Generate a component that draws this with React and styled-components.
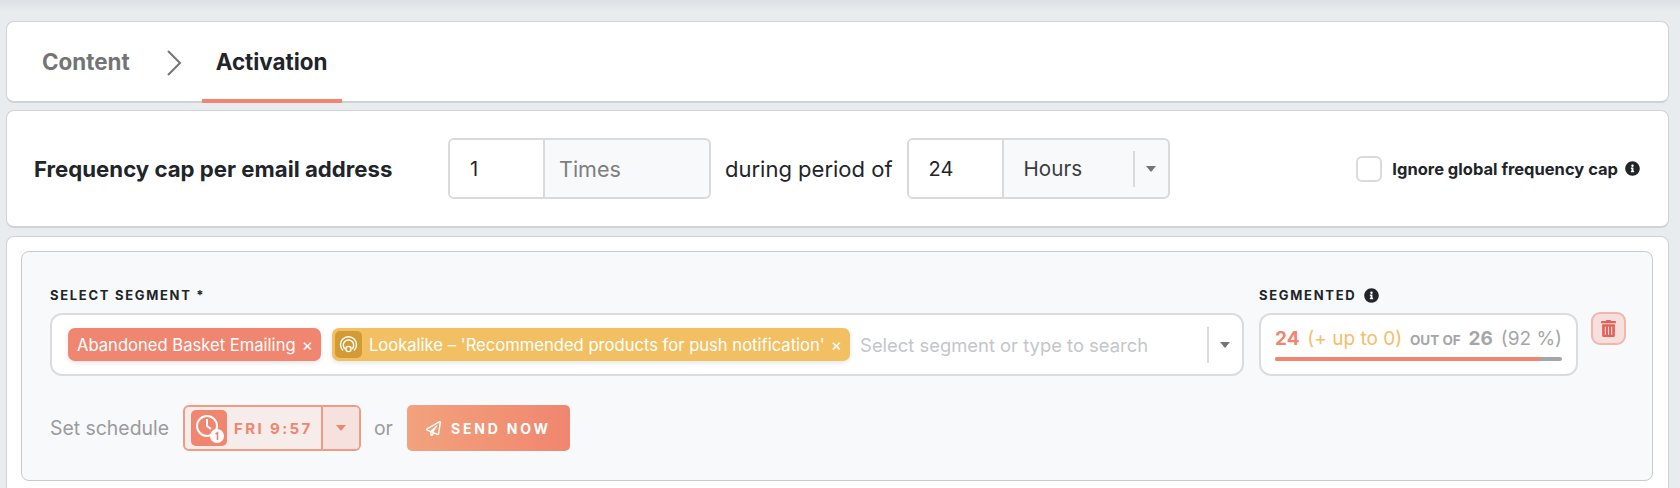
import React from 'react';
import styled, {createGlobalStyle} from 'styled-components';
import {FaInfoCircle, FaRegPaperPlane, FaTrashAlt} from 'react-icons/fa';

const GlobalStyle = createGlobalStyle`
  html, body {
    margin: 0;
    height: 100%;
    overflow: hidden;
    font-family: Inter, "Liberation Sans", sans-serif;
    color: #212529;
  }
  * { box-sizing: border-box; }
`;

const Page = styled.div`
  height: 488px;
  overflow: hidden;
  padding: 21px 11px 0 6px;
  background: linear-gradient(#dee1e5, #e9ecef 12px);
`;

const Card = styled.section`
  background: #fff;
  border: 1px solid #d0d2d4;
  border-bottom-width: 2px;
  border-radius: 8px;
  margin-bottom: ${p => p.$gap || 0}px;
`;

const TabBar = styled(Card)`
  height: 82px;
  display: flex;
  padding-left: 35px;
`;

const Tab = styled.div`
  display: flex;
  align-items: center;
  height: 81px;
  padding: ${p => (p.$active ? '2px 14px 0' : '0 0 2px')};
  font-size: 22.4px;
  font-weight: 700;
  color: ${p => (p.$active ? '#212529' : '#737475')};
  border-bottom: ${p => (p.$active ? '4px solid #f0866f' : 'none')};
`;

const Chevron = styled.svg`
  width: 16px;
  height: 26px;
  margin: 28px 20px 0 36px;
  fill: none;
  stroke: #737475;
  stroke-width: 2;
`;

const CapRow = styled(Card)`
  height: 118px;
  display: flex;
  align-items: center;
  padding: 0 28px 0 27px;
`;

const CapTitle = styled.div`
  width: 414px;
  font-size: 22.2px;
  font-weight: 700;
  white-space: nowrap;
`;

const InputGroup = styled.div`
  display: flex;
  width: ${p => p.$width}px;
  height: 61px;
  background: #f8f9fb;
  border: 2px solid #d9dadc;
  border-radius: 6px;
  overflow: hidden;
`;

const NumberCell = styled.div`
  width: 95px;
  display: flex;
  align-items: center;
  padding-left: 20px;
  font-size: 20px;
  background: #fff;
  border-right: 2px solid #d9dadc;
`;

const UnitCell = styled.div`
  flex: 1;
  display: flex;
  align-items: center;
  padding-left: ${p => p.$pad}px;
  font-size: ${p => p.$size}px;
  color: ${p => p.$color};
`;

const Joiner = styled.div`
  margin: 0 14px;
  font-size: 22px;
  white-space: nowrap;
`;

const SelectEnd = styled.div`
  display: flex;
  align-items: center;
  align-self: center;
  gap: 11px;
  height: 36px;
  margin-right: 12px;
`;

const VRule = styled.span`
  width: 2px;
  height: 36px;
  background: #d9dadc;
`;

const Caret = styled.span`
  width: 0;
  height: 0;
  border-left: 5px solid transparent;
  border-right: 5px solid transparent;
  border-top: 6px solid ${p => p.$color || '#737475'};
`;

const IgnoreWrap = styled.div`
  margin-left: auto;
  display: flex;
  align-items: center;
`;

const Checkbox = styled.span`
  width: 26px;
  height: 26px;
  background: #fff;
  border: 2px solid #d9dadc;
  border-radius: 6px;
  margin-right: 10px;
`;

const IgnoreText = styled.span`
  font-size: 16.5px;
  font-weight: 700;
  white-space: nowrap;
  margin-right: 7px;
`;

const SegmentCard = styled(Card)`
  height: 300px;
  padding: 14px 15px 0 14px;
`;

const Panel = styled.div`
  height: 230px;
  background: #f8f9fb;
  border: 1px solid #c9cacc;
  border-radius: 8px;
  padding: 33px 0 0 28px;
`;

const SegmentRow = styled.div`
  display: flex;
  align-items: flex-start;
`;

const Field = styled.div`
  display: flex;
  flex-direction: column;
  gap: 8px;
  width: ${p => p.$width}px;
  margin-right: ${p => p.$gap || 0}px;
`;

const FieldLabel = styled.div`
  display: flex;
  align-items: center;
  gap: 8px;
  height: 20px;
  font-size: 13px;
  font-weight: 700;
  letter-spacing: 1.7px;
  white-space: nowrap;
`;

const SelectBox = styled.div`
  height: 63px;
  display: flex;
  align-items: center;
  background: #fff;
  border: 2px solid #dbdcde;
  border-radius: 12px;
  padding-left: 16px;
`;

const Tag = styled.div`
  display: flex;
  align-items: center;
  height: 33px;
  margin-right: ${p => p.$gap}px;
  padding: 0 8px 0 ${p => (p.$icon ? 3 : 9)}px;
  font-size: 16.6px;
  color: #fff;
  white-space: nowrap;
  background: ${p => p.$color};
  border-radius: 7px;
  box-shadow: 0 2px 5px rgba(0, 0, 0, 0.1);
`;

const TagIcon = styled.span`
  display: flex;
  align-items: center;
  justify-content: center;
  width: 27px;
  height: 27px;
  margin-right: 7px;
  background: #d39a36;
  border-radius: 5px;
`;

const TagClose = styled.span`
  margin-left: 6px;
  font-size: 17px;
`;

const Placeholder = styled.div`
  flex: 1;
  font-size: 18.4px;
  color: #c4c6c9;
  white-space: nowrap;
`;

const StatsBox = styled.div`
  height: 63px;
  background: #fff;
  border: 2px solid #dbdcde;
  border-radius: 12px;
  padding: 12px 14px 0;
`;

const StatsLine = styled.div`
  display: flex;
  align-items: baseline;
  justify-content: space-between;
  height: 28px;
  white-space: nowrap;
`;

const Stat = styled.span`
  font-size: ${p => p.$size || 19}px;
  font-weight: ${p => p.$weight || 400};
  color: ${p => p.$color};
`;

const Progress = styled.div`
  height: 4px;
  margin-top: 2px;
  background: #a5a6a7;
  border-radius: 2px;
  overflow: hidden;
`;

const ProgressFill = styled.div`
  height: 100%;
  background: #f0866f;
`;

const DeleteButton = styled.button`
  display: flex;
  align-items: center;
  justify-content: center;
  width: 35px;
  height: 33px;
  padding: 0;
  margin-top: 27px;
  color: #e2635a;
  font-size: 17px;
  background: #f6dfdd;
  border: 2px solid #f4b5aa;
  border-radius: 9px;
`;

const ScheduleRow = styled.div`
  display: flex;
  align-items: center;
  margin-top: 29px;
`;

const MutedText = styled.span`
  font-size: 19.4px;
  color: #9a9b9d;
  margin-right: ${p => p.$gap}px;
`;

const ScheduleButton = styled.div`
  display: flex;
  width: 178px;
  height: 46px;
  margin-right: 13px;
  background: #f6ecea;
  border: 2px solid #f39a85;
  border-radius: 6px;
  overflow: hidden;
`;

const ScheduleMain = styled.div`
  display: flex;
  align-items: center;
  width: 138px;
  padding-left: 6px;
  font-size: 15px;
  font-weight: 700;
  letter-spacing: 2.4px;
  color: #f0866f;
  border-right: 2px solid #f39a85;
  white-space: nowrap;
`;

const ClockTile = styled.span`
  display: flex;
  width: 36px;
  height: 36px;
  margin-right: 7px;
  background: #f0866f;
  border-radius: 5px;
`;

const ScheduleCaret = styled.div`
  flex: 1;
  display: flex;
  align-items: center;
  justify-content: center;
  background: #f5e2df;
`;

const SendButton = styled.button`
  display: flex;
  align-items: center;
  justify-content: center;
  gap: 10px;
  width: 163px;
  height: 46px;
  padding: 0;
  font-family: inherit;
  font-size: 14px;
  font-weight: 700;
  letter-spacing: 2.8px;
  color: #fff;
  background: linear-gradient(90deg, #f2a27c, #f0866f);
  border: none;
  border-radius: 5px;
  svg { font-size: 15px; }
`;

function App() {
  return (
    <Page>
      <GlobalStyle />
      <TabBar as="nav" $gap={7}>
        <Tab>Content</Tab>
        <Chevron viewBox="0 0 16 26">
          <path d="M2 1l12 12L2 25" />
        </Chevron>
        <Tab $active>Activation</Tab>
      </TabBar>

      <CapRow $gap={8}>
        <CapTitle>Frequency cap per email address</CapTitle>
        <InputGroup $width={263}>
          <NumberCell>1</NumberCell>
          <UnitCell $pad={14} $size={21.5} $color="#7d7e80">Times</UnitCell>
        </InputGroup>
        <Joiner>during period of</Joiner>
        <InputGroup $width={263}>
          <NumberCell>24</NumberCell>
          <UnitCell $pad={20} $size={20.6} $color="#3a3c3f">Hours</UnitCell>
          <SelectEnd>
            <VRule />
            <Caret />
          </SelectEnd>
        </InputGroup>
        <IgnoreWrap>
          <Checkbox />
          <IgnoreText>Ignore global frequency cap</IgnoreText>
          <FaInfoCircle size={15} />
        </IgnoreWrap>
      </CapRow>

      <SegmentCard>
        <Panel>
          <SegmentRow>
            <Field $width={1194} $gap={15}>
              <FieldLabel>SELECT SEGMENT *</FieldLabel>
              <SelectBox>
                <Tag $color="#f0866f" $gap={11}>
                  Abandoned Basket Emailing<TagClose>×</TagClose>
                </Tag>
                <Tag $color="#f2c063" $gap={10} $icon>
                  <TagIcon>
                    <svg width="19" height="19" viewBox="0 0 19 19" fill="none" stroke="#fff" strokeWidth="1.4">
                      <path d="M4 15.5a8 8 0 1 1 11 0" />
                      <path d="M6 14a5.2 5.2 0 1 1 7 0" />
                      <circle cx="9.5" cy="14" r="2.6" />
                    </svg>
                  </TagIcon>
                  Lookalike – 'Recommended products for push notification'
                  <TagClose>×</TagClose>
                </Tag>
                <Placeholder>Select segment or type to search</Placeholder>
                <SelectEnd>
                  <VRule />
                  <Caret />
                </SelectEnd>
              </SelectBox>
            </Field>
            <Field $width={319} $gap={13}>
              <FieldLabel>
                SEGMENTED
                <FaInfoCircle size={15} />
              </FieldLabel>
              <StatsBox>
                <StatsLine>
                  <Stat $weight={700} $color="#f0866f">24</Stat>
                  <Stat $color="#f4bd69">(+ up to 0)</Stat>
                  <Stat $weight={700} $size={13.5} $color="#a5a6a7">OUT OF</Stat>
                  <Stat $weight={700} $color="#a5a6a7">26</Stat>
                  <Stat $color="#a5a6a7">(92 %)</Stat>
                </StatsLine>
                <Progress>
                  <ProgressFill style={{width: `${(24 / 26) * 100}%`}} />
                </Progress>
              </StatsBox>
            </Field>
            <DeleteButton aria-label="Delete">
              <FaTrashAlt />
            </DeleteButton>
          </SegmentRow>

          <ScheduleRow>
            <MutedText $gap={14}>Set schedule</MutedText>
            <ScheduleButton>
              <ScheduleMain>
                <ClockTile>
                  <svg width="36" height="36" viewBox="0 0 36 36" fill="none">
                    <circle cx="16" cy="16" r="10" stroke="#fff" strokeWidth="2" />
                    <path d="M16 9v7l4 3" stroke="#fff" strokeWidth="2" />
                    <circle cx="26" cy="26" r="7" fill="#fff" />
                    <path d="M24.5 24l2-1.2V30" stroke="#f0866f" strokeWidth="1.6" />
                  </svg>
                </ClockTile>
                FRI 9:57
              </ScheduleMain>
              <ScheduleCaret>
                <Caret $color="#f0866f" />
              </ScheduleCaret>
            </ScheduleButton>
            <MutedText $gap={14}>or</MutedText>
            <SendButton>
              <FaRegPaperPlane />
              SEND NOW
            </SendButton>
          </ScheduleRow>
        </Panel>
      </SegmentCard>
    </Page>
  );
}

export default App;
